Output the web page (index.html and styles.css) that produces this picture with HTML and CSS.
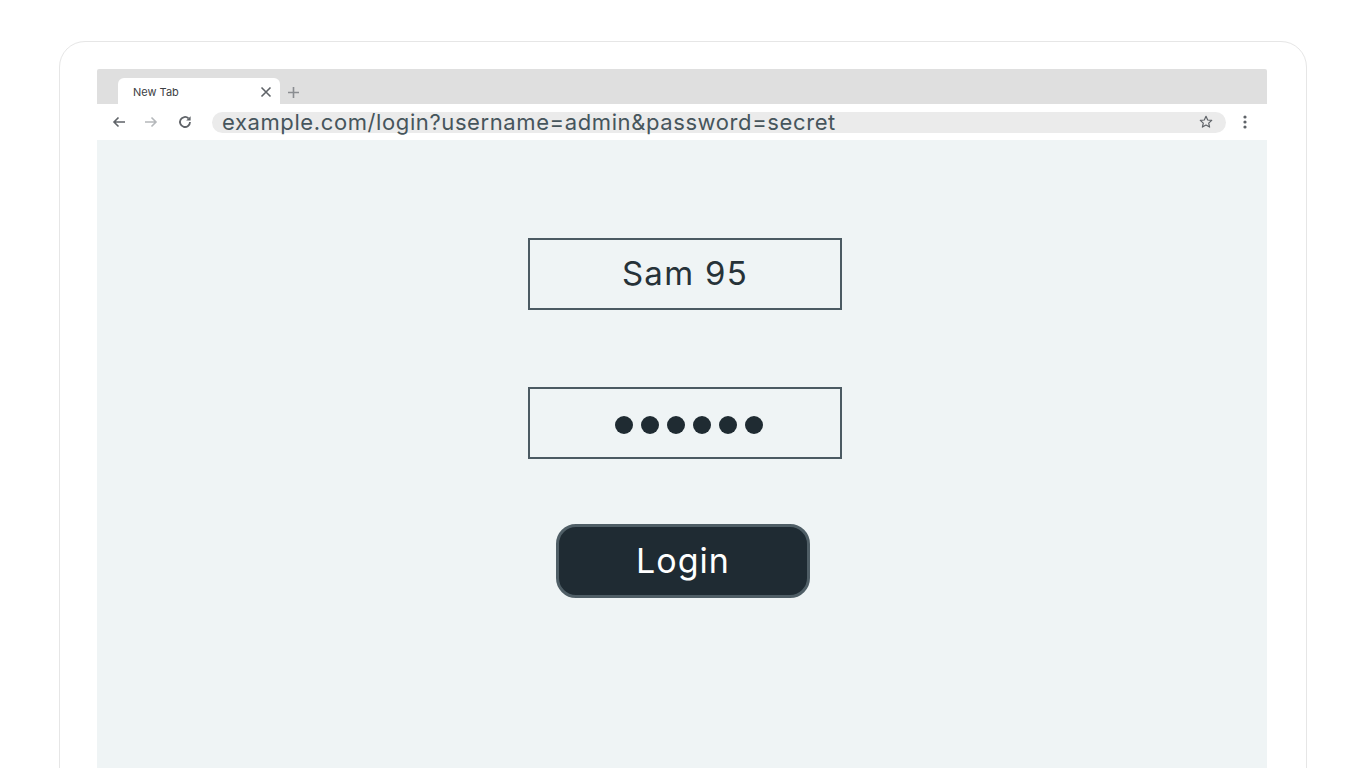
FILE: index.html
```html
<!DOCTYPE html>
<html>
<head>
<meta charset="utf-8">
<link rel="stylesheet" href="styles.css">
</head>
<body>
<div class="device">
  <div class="browser">
    <div class="tabstrip">
      <div class="tab">
        <span class="tab-title">New Tab</span>
        <svg class="tab-close" width="12" height="12" viewBox="0 0 12 12"><path d="M1.5 1.5L10.5 10.5M10.5 1.5L1.5 10.5" stroke="#5f6368" stroke-width="1.6" fill="none"/></svg>
      </div>
      <svg class="tab-new" width="13" height="13" viewBox="0 0 13 13"><path d="M6.5 1V12M1 6.5H12" stroke="#8a8d91" stroke-width="1.6" fill="none"/></svg>
    </div>
    <div class="toolbar">
      <div class="nav">
        <svg width="16" height="16" viewBox="0 0 16 16"><path d="M14 8H3M7.5 3.5L3 8l4.5 4.5" stroke="#5f6368" stroke-width="1.6" fill="none"/></svg>
        <svg width="16" height="16" viewBox="0 0 16 16"><path d="M2 8h11M8.5 3.5L13 8l-4.5 4.5" stroke="#b5b8bb" stroke-width="1.6" fill="none"/></svg>
        <svg width="16" height="16" viewBox="0 0 16 16"><path d="M13 8a5 5 0 1 1-1.5-3.6" stroke="#5f6368" stroke-width="1.8" fill="none"/><path d="M13.6 2.2v4.4H9.2z" fill="#5f6368"/></svg>
      </div>
      <div class="omnibox">
        <span class="url">example.com/login?username=admin&amp;password=secret</span>
        <svg class="star" width="14" height="14" viewBox="0 0 14 14"><path d="M7 1.3l1.7 3.7 4 .4-3 2.7.9 4-3.6-2.1-3.6 2.1.9-4-3-2.7 4-.4z" stroke="#5f6368" stroke-width="1.2" fill="none" stroke-linejoin="round"/></svg>
      </div>
      <svg class="menu" width="4" height="14" viewBox="0 0 4 14"><circle cx="2" cy="2" r="1.6" fill="#5f6368"/><circle cx="2" cy="7" r="1.6" fill="#5f6368"/><circle cx="2" cy="12" r="1.6" fill="#5f6368"/></svg>
    </div>
    <div class="page">
      <div class="field"><span class="username">Sam 95</span></div>
      <div class="field password">
        <span class="dot"></span><span class="dot"></span><span class="dot"></span><span class="dot"></span><span class="dot"></span><span class="dot"></span>
      </div>
      <button class="login">Login</button>
    </div>
  </div>
</div>
</body>
</html>
```
FILE: styles.css
```css
* { box-sizing: border-box; }
html, body { margin: 0; padding: 0; background: #ffffff; overflow: hidden; }
body { width: 1366px; height: 768px; font-family: Inter, "Open Sans", sans-serif; }

.device {
  margin: 41px 0 0 59px;
  width: 1248px;
  height: 760px;
  border: 1.5px solid #e6e6e6;
  border-radius: 26px;
  padding: 27px 39px 0 37px;
}

.browser { width: 1170px; display: flex; flex-direction: column; height: 700px; }

.tabstrip {
  height: 35px;
  background: #dfdfdf;
  display: flex;
  align-items: flex-end;
  padding-left: 21px;
  border-radius: 2px 2px 0 0;
}
.tab {
  width: 162px;
  height: 26px;
  background: #ffffff;
  border-radius: 6px 6px 0 0;
  display: flex;
  align-items: center;
  justify-content: space-between;
  padding: 2px 8px 0 15px;
}
.tab-title { font-size: 11px; color: #3c4043; font-family: Inter, sans-serif; }
.tab-new { margin: 0 0 5px 7px; }

.toolbar {
  height: 36px;
  background: #ffffff;
  display: flex;
  align-items: center;
}
.nav { display: flex; align-items: center; gap: 16px; padding-left: 14px; width: 115px; }
.nav svg:nth-child(3) { margin-left: 2px; }
.omnibox {
  width: 1014px;
  height: 21px;
  background: #ebebeb;
  border-radius: 11px;
  display: flex;
  align-items: center;
  justify-content: space-between;
  padding: 0 13px 0 10px;
}
.url {
  font-size: 22px;
  color: #46555c;
  letter-spacing: 0.6px;
  line-height: 21px;
  white-space: nowrap;
}
.menu { margin-left: 17px; }

.page {
  flex: 1;
  background: #eff4f5;
  display: flex;
  flex-direction: column;
  align-items: center;
  padding-top: 98px;
}
.field {
  width: 314px;
  height: 72px;
  border: 2px solid #4b5a62;
  display: flex;
  align-items: center;
  justify-content: center;
  margin-left: 6px;
}
.username { font-size: 33px; color: #263238; letter-spacing: 1.3px; padding-bottom: 2px; }
.password { margin-top: 77px; gap: 8px; padding-top: 3px; padding-left: 7px; }
.dot { width: 18px; height: 18px; border-radius: 50%; background: #1f2b32; }
.login {
  margin-top: 65px;
  width: 254px;
  height: 74px;
  border: 3px solid #4f5e66;
  background: #1f2b33;
  border-radius: 20px;
  color: #ffffff;
  font-family: Inter, "Open Sans", sans-serif;
  font-size: 34px;
  letter-spacing: 1px;
  padding: 0 0 2px 0;
  margin-left: 2px;
}
```
